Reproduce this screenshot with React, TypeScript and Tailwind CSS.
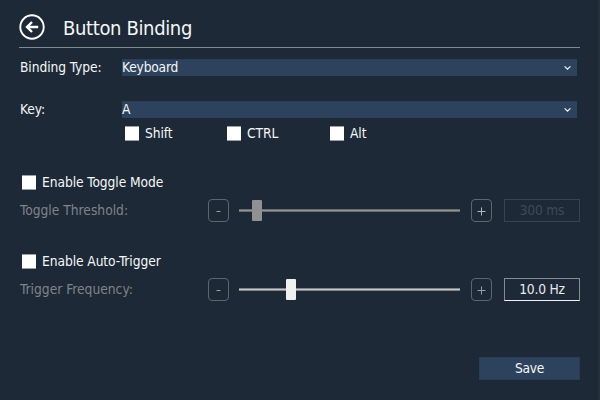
import React from "react";

function Combo({ value }: { value: string }) {
  return (
    <div className="flex h-[17px] w-[455px] items-center justify-between border-t border-[#293e54] bg-[#2d435d] pr-[6px] text-[#f4f6f8]">
      <span className="mb-px tracking-[-0.2px]">{value}</span>
      <svg width="7" height="5" viewBox="0 0 7 5" fill="none" stroke="#eef2f6" strokeWidth="1.2">
        <path d="M0.6 0.4 L3.5 3.1 L6.4 0.4" />
      </svg>
    </div>
  );
}

function Check({ label, className = "" }: { label: string; className?: string }) {
  return (
    <label className={`flex items-center text-[#f4f6f8] ${className}`}>
      <span className="mr-[6px] h-[15px] w-[14px] shrink-0 border-y border-[#9a9fa5] bg-white" />
      <span>{label}</span>
    </label>
  );
}

function StepButton({ sign, dim }: { sign: string; dim: boolean }) {
  return (
    <button className={`flex h-[23px] w-[21px] shrink-0 items-center justify-center rounded-[4px] border border-[#5c666f] ${dim ? "text-[#b5b8ba]" : "text-[#9b9fa3]"}`}>
      <svg className="mt-px" width="9" height="9" viewBox="0 0 9 9" stroke="currentColor" strokeWidth="1">
        {sign === "+" ? <path d="M0.5 4.5H8.5M4.5 0.5V8.5" /> : <path d="M2.5 4.5H6.5" />}
      </svg>
    </button>
  );
}

function SliderRow({ label, position, value, dim }: { label: string; position: number; value: string; dim: boolean }) {
  return (
    <div className="flex h-[23px] items-center">
      <span className="w-[189px] shrink-0 pl-px tracking-[0px] text-[#7f8387]">{label}</span>
      <StepButton sign="-" dim={false} />
      <div className="relative ml-[10px] mr-[11px] flex h-[21px] w-[221px] shrink-0 items-center">
        <div className={`h-[3px] w-full border-y ${dim ? "border-[#666b70] bg-[#949494]" : "border-[#7e858a] bg-[#c4c8ca]"}`} />
        <div className={`absolute top-0 h-[21px] w-[10px] rounded-[1px] ${dim ? "bg-[#919191]" : "bg-[#f0f0f0]"}`} style={{ left: position }} />
      </div>
      <StepButton sign="+" dim={dim} />
      <div className={`ml-[12px] flex h-[23px] w-[76px] shrink-0 items-center justify-center border tracking-[-0.2px] ${dim ? "border-[#36444f] text-[#3e4a56]" : "border-[#858c90] border-b-[#f4f4f4] text-[#e8eaec]"}`}>
        <span>{value}</span>
      </div>
    </div>
  );
}

export default function App() {
  return (
    <div className="flex h-[400px] w-[600px] flex-col overflow-hidden border-r-2 border-[#25303b] bg-[#1d2936] pl-[19px] font-['DejaVu_Sans_Condensed','DejaVu_Sans',sans-serif] text-[13.7px] leading-[17px] tracking-[-0.08px]">
      <header className="flex h-[48px] w-[561px] items-end border-b border-[#808b8e] pb-[7px]">
        <svg width="26" height="26" viewBox="0 0 26 26" fill="none" stroke="#fff">
          <circle cx="13" cy="13" r="11.7" strokeWidth="1.9" />
          <path d="M19.2 13H8M13 8L8 13L13 18" strokeWidth="2.4" />
        </svg>
        <h1 className="relative top-px ml-[18px] text-[20px] leading-[26px] tracking-[-0.36px] text-[#f4f6f8]">Button Binding</h1>
      </header>
      <div className="mt-[11px] flex h-[17px] items-center">
        <span className="w-[103px] shrink-0 pl-px text-[#f4f6f8]">Binding Type:</span>
        <Combo value="Keyboard" />
      </div>
      <div className="mt-[25px] flex h-[17px] items-center">
        <span className="w-[103px] shrink-0 pl-px text-[#f4f6f8]">Key:</span>
        <Combo value="A" />
      </div>
      <div className="ml-[106px] mt-[8px] flex h-[15px]">
        <Check label="Shift" className="w-[102px]" />
        <Check label="CTRL" className="w-[103px]" />
        <Check label="Alt" />
      </div>
      <div className="ml-[3px] mt-[34px] flex h-[15px]">
        <Check label="Enable Toggle Mode" />
      </div>
      <div className="mt-[9px]">
        <SliderRow label="Toggle Threshold:" position={13} value="300 ms" dim />
      </div>
      <div className="ml-[3px] mt-[32px] flex h-[15px]">
        <Check label="Enable Auto-Trigger" />
      </div>
      <div className="mt-[9px]">
        <SliderRow label="Trigger Frequency:" position={47} value="10.0 Hz" dim={false} />
      </div>
      <button className="ml-[460px] mt-[56px] flex h-[23px] w-[101px] items-center justify-center border border-[#293e54] bg-[#2d435d] tracking-[-0.3px] text-[#f4f6f8]">
        Save
      </button>
    </div>
  );
}
